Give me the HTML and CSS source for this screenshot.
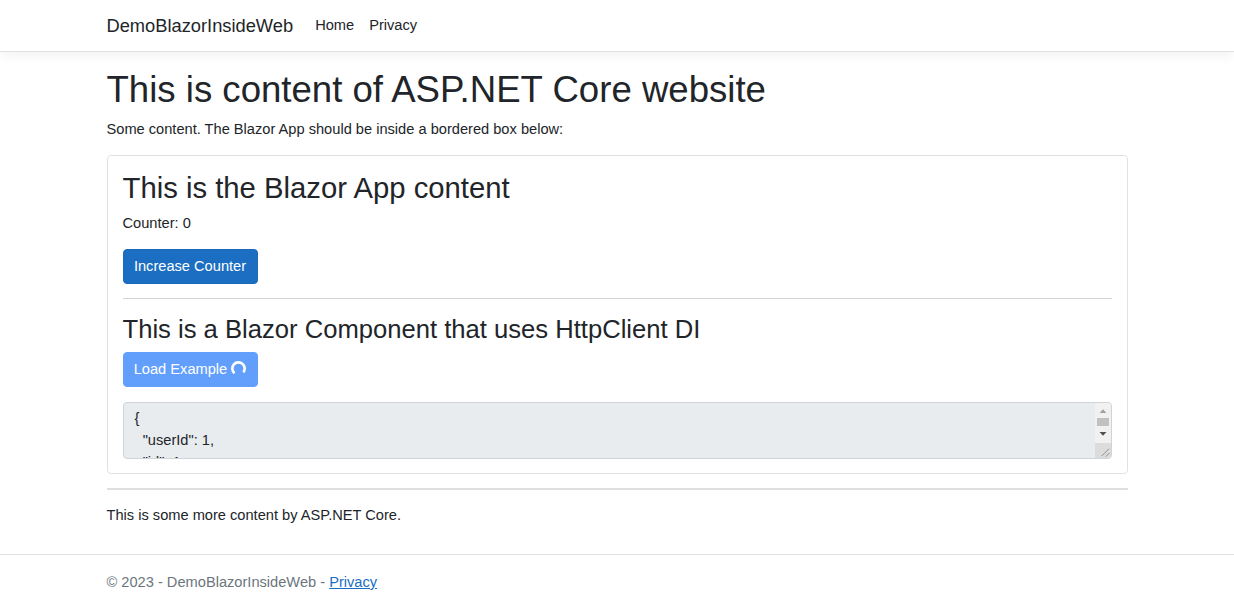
FILE: index.html
```html
<!DOCTYPE html>
<html lang="en">
<head>
<meta charset="utf-8">
<title>DemoBlazorInsideWeb</title>
<link rel="stylesheet" href="styles.css">
</head>
<body>
<header class="navbar">
  <nav class="container nav">
    <a class="brand">DemoBlazorInsideWeb</a>
    <a class="nav-link">Home</a>
    <a class="nav-link">Privacy</a>
  </nav>
</header>
<main class="container main">
  <h1>This is content of ASP.NET Core website</h1>
  <p>Some content. The Blazor App should be inside a bordered box below:</p>
  <section class="box">
    <h2>This is the Blazor App content</h2>
    <p>Counter: 0</p>
    <button class="btn">Increase Counter</button>
    <hr>
    <h3>This is a Blazor Component that uses HttpClient DI</h3>
    <button class="btn btn-loading">Load Example <svg class="spinner" viewBox="0 0 16 16"><path d="M3.8 13.1A6.6 6.6 0 1 1 13.2 12.1" fill="none" stroke="currentColor" stroke-width="2.8"/></svg></button>
    <div class="output">
      <pre class="json">{
  "userId": 1,
  "id": 1,</pre>
      <div class="scroll">
        <svg class="scroll-track" viewBox="0 0 16 40"><path d="M4.7 10L8 6.3 11.3 10z" fill="#a0a0a0"/><path d="M2 15h12v8H2z" fill="#c1c1c1"/><path d="M4.5 29h7L8 32.7z" fill="#505050"/></svg>
        <svg class="grip" viewBox="0 0 16 16"><path d="M6.5 14L14.5 6M11 14.5L15 10.5" fill="none" stroke="#8b8b8b"/></svg>
      </div>
    </div>
  </section>
  <hr class="divider">
  <p>This is some more content by ASP.NET Core.</p>
</main>
<footer class="footer">
  <div class="container">© 2023 - DemoBlazorInsideWeb - <a class="link">Privacy</a></div>
</footer>
</body>
</html>
```
FILE: styles.css
```css
* { box-sizing: border-box; }
body {
  margin: 0;
  background: #fff;
  color: #212529;
  font: 14.64px/22px "Liberation Sans", Arial, sans-serif;
  height: 610px;
  overflow: hidden;
}
.container { width: 1021px; margin: 0 auto; }
.navbar {
  height: 52px;
  border-bottom: 1px solid #dee2e6;
  box-shadow: 0 4px 11px rgba(0, 0, 0, .05);
}
.nav { display: flex; align-items: center; height: 51px; }
.brand { font-size: 18.3px; margin-right: 22px; }
.nav-link { margin-right: 15px; padding-bottom: 2px; }
.main { padding-top: 16px; }
h1, h2, h3 { margin: 0 0 7px; font-weight: 400; }
h1 { font-size: 36.6px; line-height: 44px; margin-bottom: 6px; }
h2 { font-size: 29.28px; line-height: 35px; }
h3 { font-size: 25.62px; line-height: 31px; }
p { margin: 0 0 15px; }
.box {
  height: 319px;
  padding: 14px 15px;
  border: 1px solid #dee2e6;
  border-radius: 4px;
}
.btn {
  display: block;
  width: 135px;
  height: 35px;
  padding: 0 0 1px;
  border: 1px solid #1b69b8;
  border-radius: 4px;
  background: #1b6ec2;
  color: #fff;
  font: inherit;
  text-align: center;
  white-space: nowrap;
}
.btn-loading { border-color: #629ffd; background: #629ffd; }
.spinner { width: 15px; height: 15px; vertical-align: -2px; }
hr { height: 1px; margin: 14px 0 15px; border: 0; background: #d3d4d5; }
.output {
  display: flex;
  justify-content: space-between;
  height: 57px;
  margin-top: 15px;
  overflow: hidden;
  border: 1px solid #ced4da;
  border-radius: 4px;
  background: #e9ecef;
}
.json { margin: 0; padding: 4px 11px; font: inherit; }
.scroll { display: flex; flex-direction: column; width: 16px; }
.scroll-track { width: 16px; height: 40px; background: #f1f1f1; }
.grip { width: 16px; height: 15px; background: #dcdcdc; }
.divider { height: 2px; margin: 14px 0; background: #dedfe0; }
.footer {
  margin-top: 28px;
  padding-top: 16px;
  border-top: 1px solid #dee2e6;
  color: #6c757d;
}
.link { color: #1b6ec2; text-decoration: underline; }
```
